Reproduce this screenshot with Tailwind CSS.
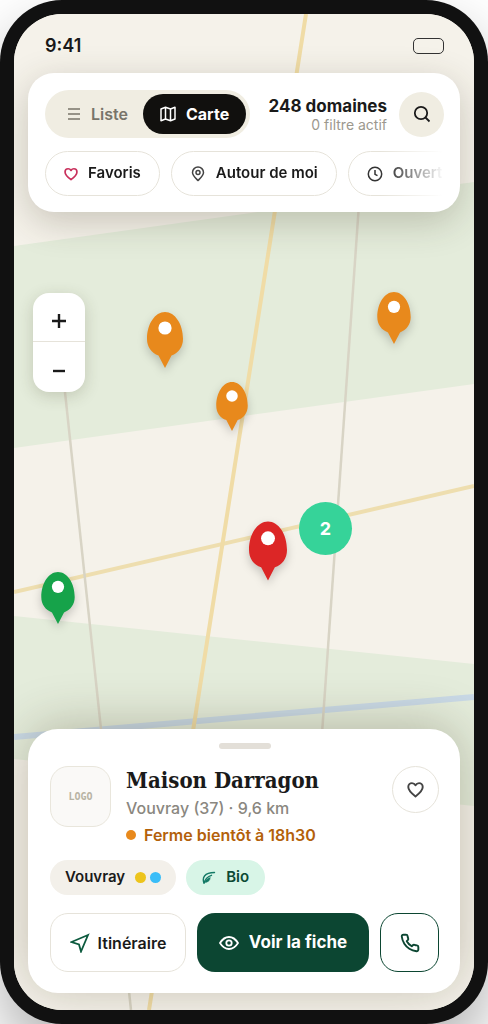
<!DOCTYPE html>
<html lang="fr">
    <head>
        <meta charset="utf-8">
        <meta name="viewport" content="width=device-width, initial-scale=1">

        <title>Carte des domaines</title>
        <script src="https://cdn.jsdelivr.net/npm/@tailwindcss/browser@4"></script>
    </head>
    <body class="bg-white font-['Inter',sans-serif] text-[#1a1a1a]">

    <!-- Telephone -->
    <div class="mx-auto flex min-h-screen max-w-[488px] rounded-[62px] bg-[#111111] p-3.5 shadow-[0_30px_60px_rgba(0,0,0,0.3)]">
        <div class="relative isolate flex w-full flex-col overflow-hidden rounded-[48px] bg-[#f5f2ea]">

            <!-- Fond de carte -->
            <svg class="absolute inset-0 -z-10 h-full w-full" viewBox="0 0 460 996" preserveAspectRatio="xMidYMid slice" fill="none" aria-hidden="true">
                <rect width="460" height="996" fill="#f5f2ea"/>
                <path d="M0 232L460 168V370L0 434Z" fill="#e4ecdb"/>
                <path d="M0 602L460 650V792L0 745Z" fill="#e4ecdb"/>
                <path d="M0 723L460 683" stroke="#c9d9e6" stroke-width="6"/>
                <path d="M0 578L460 472" stroke="#eedeaf" stroke-width="4"/>
                <path d="M292 0L135 996" stroke="#f0dca6" stroke-width="4"/>
                <path d="M48 350L117 996" stroke="#d8d4c5" stroke-width="2.5"/>
                <path d="M345 190L301 820" stroke="#d8d4c5" stroke-width="2.5"/>
            </svg>

            <!-- Les domaines sur la carte -->
            <svg class="hidden">
                <symbol id="pin" viewBox="0 0 36 56">
                    <path d="M18 0C28 0 36 12 36 27C36 35 31.500 41 24.500 43.500L18 56L11.500 43.500C4.500 41 0 35 0 27C0 12 8 0 18 0Z" fill="currentColor"/>
                    <circle cx="18" cy="16" r="6.6" fill="#fff"/>
                </symbol>
            </svg>
            <button aria-label="Domaine 1" class="absolute top-[298px] left-[133px] -z-10 text-[#e8891c] drop-shadow-[0_4px_5px_rgba(0,0,0,0.2)]"><svg class="h-14 w-9"><use href="#pin"/></svg></button>
            <button aria-label="Domaine 2" class="absolute top-[278px] left-[363px] -z-10 text-[#e8891c] drop-shadow-[0_4px_5px_rgba(0,0,0,0.2)]"><svg class="h-[52px] w-[34px]"><use href="#pin"/></svg></button>
            <button aria-label="Domaine 3" class="absolute top-[368px] left-[202px] -z-10 text-[#e8891c] drop-shadow-[0_4px_5px_rgba(0,0,0,0.2)]"><svg class="h-[49px] w-8"><use href="#pin"/></svg></button>
            <button aria-label="Maison Darragon" class="absolute top-[507px] left-[235px] -z-10 text-[#dc2626] drop-shadow-[0_4px_5px_rgba(0,0,0,0.2)]"><svg class="h-[60px] w-[38px]"><use href="#pin"/></svg></button>
            <button aria-label="Domaine 5" class="absolute top-[558px] left-[27px] -z-10 text-[#16a34a] drop-shadow-[0_4px_5px_rgba(0,0,0,0.2)]"><svg class="h-[52px] w-[34px]"><use href="#pin"/></svg></button>
            <button class="absolute top-[488px] left-[285px] -z-10 size-[53px] rounded-full bg-[#36d399] text-lg font-bold text-white">2</button>

            <!-- Barre de statut -->
            <div class="flex h-[59px] shrink-0 items-center justify-between pt-1 pr-[30px] pl-[31px]">
                <span class="text-lg font-semibold">9:41</span>
                <span class="h-4 w-[31px] rounded-[5px] border border-[#333333]"></span>
            </div>

            <!-- Filtres -->
            <div class="mx-3.5 flex flex-col gap-[13px] rounded-[26px] bg-white pt-[17px] pr-4 pb-4 pl-[17px] shadow-[0_10px_36px_rgba(60,50,30,0.24)]">
                <div class="flex items-center">
                    <div class="flex h-12 shrink-0 items-center rounded-full bg-[#f0ede2] p-1">
                        <button class="flex h-10 items-center gap-2.5 pr-[15px] pl-[18px] font-semibold text-[#78746a]">
                            <svg class="size-3.5" viewBox="0 0 14 14" fill="none" stroke="currentColor" stroke-width="1.5"><path d="M1 2H13M1 7H13M1 12H13"/></svg>
                            Liste
                        </button>
                        <button class="flex h-10 items-center gap-2.5 rounded-full bg-[#11100e] px-[17px] font-bold text-white">
                            <svg class="size-4" viewBox="0 0 16 16" fill="none" stroke="currentColor" stroke-width="1.5" stroke-linejoin="round"><path d="M1 3L5.500 1.200L10.500 3L15 1.200V13L10.500 14.800L5.500 13L1 14.800ZM5.500 1.200V13M10.500 3V14.800"/></svg>
                            Carte
                        </button>
                    </div>
                    <div class="min-w-0 flex-1 pt-0.5 pr-3 text-right whitespace-nowrap">
                        <p class="text-[17px] leading-5 font-bold">248 domaines</p>
                        <p class="text-sm leading-[18px] text-[#9c988e]">0 filtre actif</p>
                    </div>
                    <button aria-label="Rechercher" class="flex size-[45px] shrink-0 items-center justify-center rounded-full bg-[#f0ede2]">
                        <svg class="size-[18px]" viewBox="0 0 18 18" fill="none" stroke="currentColor" stroke-width="1.8"><circle cx="8" cy="8" r="6.200"/><path d="M12.500 12.500L16.500 16.500"/></svg>
                    </button>
                </div>
                <div class="flex gap-[11px] overflow-hidden text-[15px] whitespace-nowrap [mask-image:linear-gradient(to_right,#000_84%,transparent)]">
                    <button class="flex h-[45px] shrink-0 items-center gap-2.5 rounded-full border border-[#e6e3da] px-[18px] font-semibold">
                        <svg class="size-3.5 text-[#c9305c]" viewBox="0 0 16 16" fill="none" stroke="currentColor" stroke-width="1.9" stroke-linejoin="round"><path d="M8 14.500C4 11.500 1.200 9 1.200 5.700C1.200 3.500 2.800 2 4.700 2C6.200 2 7.300 2.800 8 4C8.700 2.800 9.800 2 11.300 2C13.200 2 14.800 3.500 14.800 5.700C14.800 9 12 11.500 8 14.500Z"/></svg>
                        Favoris
                    </button>
                    <button class="flex h-[45px] shrink-0 items-center gap-2.5 rounded-full border border-[#e6e3da] px-[18px] font-semibold">
                        <svg class="size-4 text-[#444444]" viewBox="0 0 16 16" fill="none" stroke="currentColor" stroke-width="1.500"><path d="M8 14.500C5 11.500 2.500 9.500 2.500 6.500A5.500 5.500 0 0 1 13.500 6.500C13.500 9.500 11 11.500 8 14.500Z"/><circle cx="8" cy="6.500" r="2"/></svg>
                        Autour de moi
                    </button>
                    <button class="flex h-[45px] shrink-0 items-center gap-2.5 rounded-full border border-[#e6e3da] px-[18px] font-semibold">
                        <svg class="size-4 text-[#333333]" viewBox="0 0 16 16" fill="none" stroke="currentColor" stroke-width="1.500"><circle cx="8" cy="8" r="6.700"/><path d="M8 4V8.300L10.500 9.600"/></svg>
                        Ouvert
                    </button>
                </div>
            </div>

            <!-- Zoom -->
            <div class="mt-[81px] ml-[19px] flex w-[52px] flex-col rounded-2xl bg-white shadow-[0_4px_16px_rgba(60,60,30,0.2)]">
                <button aria-label="Zoom avant" class="flex h-[49px] items-center justify-center border-b border-[#e6e3da] pt-2">
                    <svg class="size-3.5" viewBox="0 0 14 14" stroke="currentColor" stroke-width="2.400"><path d="M0 7H14M7 0V14"/></svg>
                </button>
                <button aria-label="Zoom arrière" class="flex h-[50px] items-center justify-center pt-2">
                    <svg class="size-3.5" viewBox="0 0 14 14" stroke="currentColor" stroke-width="2.400"><path d="M1 7H13"/></svg>
                </button>
            </div>

            <!-- Fiche du domaine -->
            <div class="mx-3.5 mt-auto mb-[17px] rounded-[30px] bg-white pt-3.5 pr-[21px] pb-[21px] pl-[22px] shadow-[0_-4px_50px_rgba(60,50,20,0.28)]">
                <div class="mx-auto h-1.5 w-[52px] rounded-full bg-[#e3dfd8]"></div>
                <div class="mt-[17px] flex items-start">
                    <div class="flex size-[61px] shrink-0 items-center justify-center rounded-[18px] border border-[#e9e6dc] bg-[#faf9f7] font-['DejaVu_Sans_Mono',monospace] text-[10px] font-bold text-[#b8b4a4]">LOGO</div>
                    <div class="ml-[15px] min-w-0 flex-1 whitespace-nowrap">
                        <h1 class="font-['DejaVu_Serif_Condensed','DejaVu_Serif',serif] text-[22px] leading-7 font-bold">Maison Darragon</h1>
                        <p class="leading-7 font-medium text-[#8a8780]">Vouvray (37) · 9,6 km</p>
                        <p class="flex items-center gap-2 leading-[26px] font-semibold text-[#b3610a]"><span class="size-2.5 rounded-full bg-[#e8891c]"></span>Ferme bientôt à 18h30</p>
                    </div>
                    <button aria-label="Ajouter aux favoris" class="flex size-[47px] shrink-0 items-center justify-center rounded-full border border-[#e6e3da] text-[#444444]">
                        <svg class="size-[17px]" viewBox="0 0 16 16" fill="none" stroke="currentColor" stroke-width="1.800" stroke-linejoin="round"><path d="M8 14.500C4 11.500 1.200 9 1.200 5.700C1.200 3.500 2.800 2 4.700 2C6.200 2 7.300 2.800 8 4C8.700 2.800 9.800 2 11.300 2C13.200 2 14.800 3.500 14.800 5.700C14.800 9 12 11.500 8 14.500Z"/></svg>
                    </button>
                </div>
                <div class="mt-3 flex gap-2.5 text-[15px]">
                    <span class="flex h-[35px] items-center rounded-full bg-[#f3f0ea] px-[15px] font-semibold">Vouvray <span class="ml-2.5 size-[11px] rounded-full bg-[#edc41c]"></span><span class="ml-1 size-[11px] rounded-full bg-[#3abdf8]"></span></span>
                    <span class="flex h-[35px] items-center gap-2.5 rounded-full bg-[#d8f5e7] px-4 font-semibold text-[#0c4a34]">
                        <svg class="size-3.5" viewBox="0 0 14 14" fill="none" stroke="#147a66" stroke-width="1.400" stroke-linecap="round"><path d="M12.500 1.500C8 1.500 4.500 2.500 2.500 5C1 7 1 9.500 2 12"/><path d="M2 12C3 8.500 5.500 5.500 9.500 4.300"/><path d="M2.500 11.500C6 11.500 8 9.500 8.300 6.500C5.500 7.500 3.500 9 2.500 11.500Z" fill="#147a66" stroke-width="0.5"/></svg>
                        Bio
                    </span>
                </div>
                <div class="mt-[18px] flex gap-[11px] whitespace-nowrap">
                    <button class="flex h-[59px] w-[136px] items-center justify-center gap-2 rounded-[18px] border border-[#e6e3da] font-semibold">
                        <svg class="size-5 text-[#0c5a3e]" viewBox="0 0 20 20" fill="none" stroke="currentColor" stroke-width="1.800"><path d="M18 2L1.500 9L9 11.500L11 18.500Z"/></svg>
                        Itinéraire
                    </button>
                    <button class="flex h-[59px] flex-1 items-center justify-center gap-2.5 rounded-[18px] bg-[#0c4632] text-[17px] font-bold text-white">
                        <svg class="size-5" viewBox="0 0 20 20" fill="none" stroke="currentColor" stroke-width="1.800"><path d="M1 10C3.500 6 6.500 4 10 4C13.500 4 16.500 6 19 10C16.500 14 13.500 16 10 16C6.500 16 3.500 14 1 10Z"/><circle cx="10" cy="10" r="2.700"/></svg>
                        Voir la fiche
                    </button>
                    <button aria-label="Appeler" class="flex size-[59px] shrink-0 items-center justify-center rounded-[18px] border border-[#0c4632] text-[#0c4632]">
                        <svg class="size-5" viewBox="0 0 24 24" fill="none" stroke="currentColor" stroke-width="2.300" stroke-linejoin="round"><path d="M22 16.920v3a2 2 0 0 1-2.180 2 19.790 19.790 0 0 1-8.630-3.070 19.500 19.500 0 0 1-6-6 19.790 19.790 0 0 1-3.070-8.670A2 2 0 0 1 4.110 2h3a2 2 0 0 1 2 1.720c.127.960.361 1.903.700 2.810a2 2 0 0 1-.450 2.110L8.090 9.910a16 16 0 0 0 6 6l1.270-1.270a2 2 0 0 1 2.110-.450c.907.339 1.850.573 2.810.700A2 2 0 0 1 22 16.920z"/></svg>
                    </button>
                </div>
            </div>
        </div>
    </div>

    </body>
</html>
